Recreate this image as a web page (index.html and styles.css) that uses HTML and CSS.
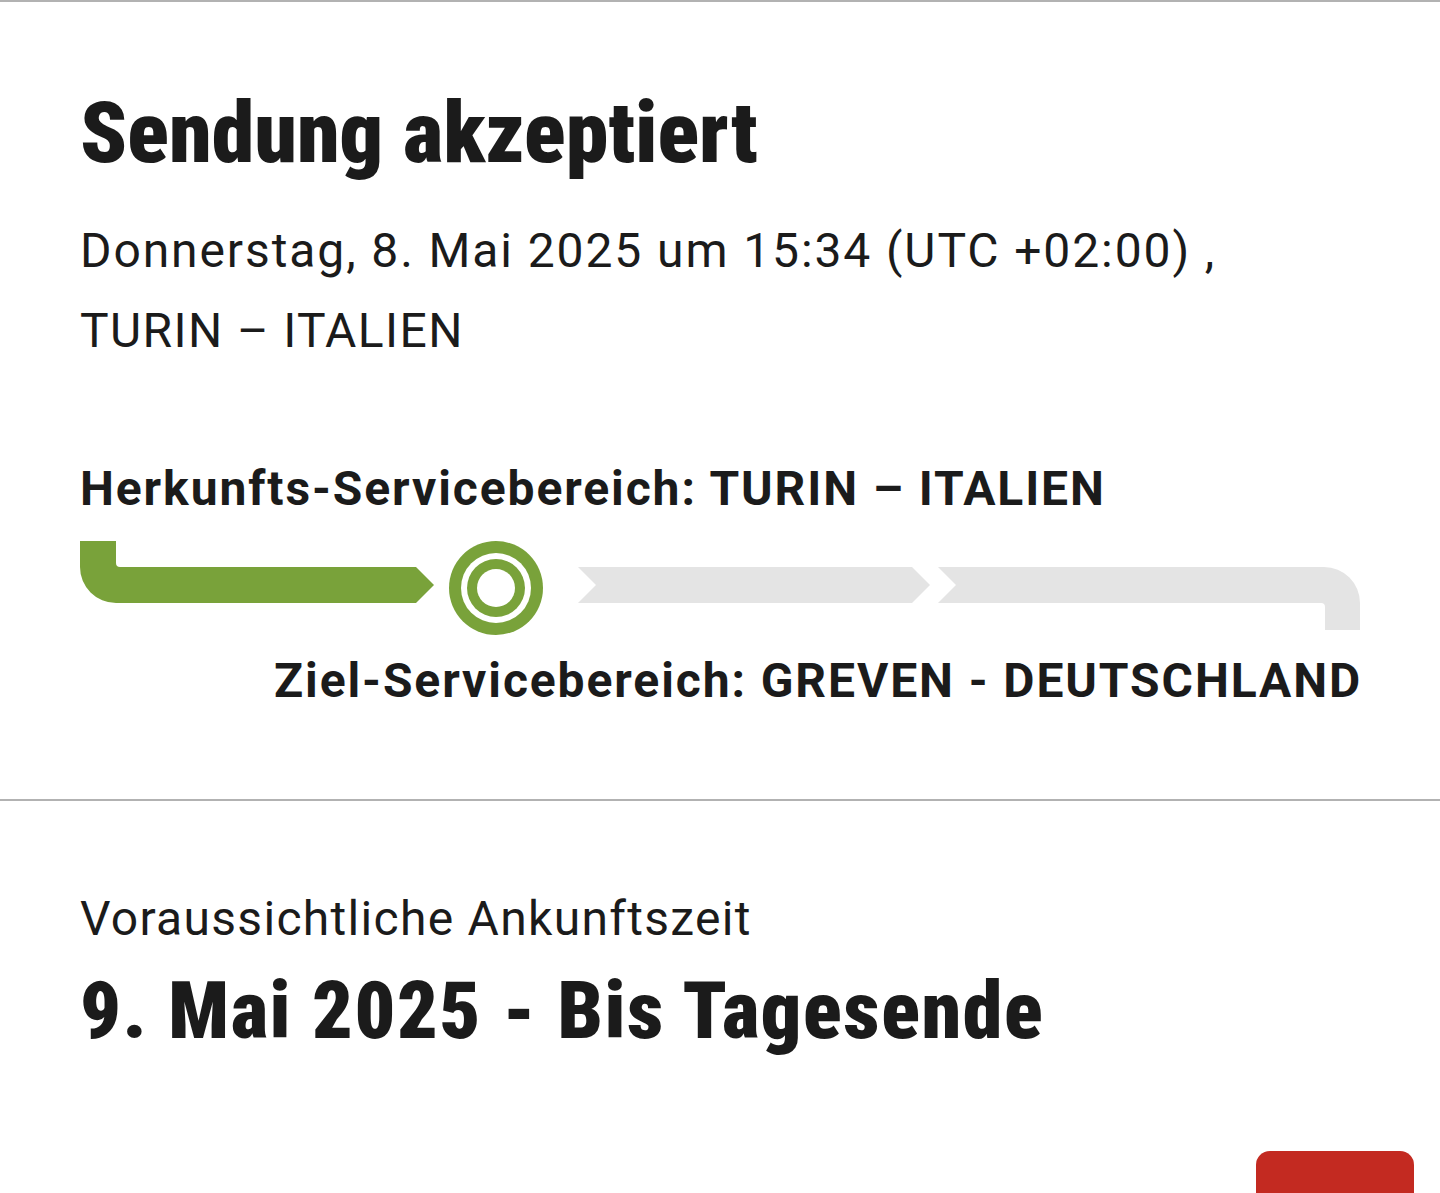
FILE: index.html
```html
<!DOCTYPE html>
<html lang="de">
<head>
<meta charset="utf-8">
<title>Sendungsverfolgung</title>
<link rel="stylesheet" href="styles.css">
</head>
<body>
<main class="page">
  <section class="status">
    <h1 class="status-title">Sendung akzeptiert</h1>
    <p class="status-date">Donnerstag, 8. Mai 2025 um 15:34 (UTC +02:00) ,</p>
    <p class="status-place">TURIN – ITALIEN</p>
  </section>

  <section class="route">
    <p class="route-origin">Herkunfts-Servicebereich: TURIN – ITALIEN</p>
    <svg class="route-bar" viewBox="0 0 1280 96" width="1280" height="96" aria-hidden="true">
      <path fill="#79a23a" d="M0,1 H36 V23 Q36,27 40,27 H336 L354,45 L336,63 H36 A36,36 0 0 1 0,27 Z"/>
      <circle cx="416" cy="48" r="47" fill="#79a23a"/>
      <circle cx="416" cy="48" r="35" fill="#ffffff"/>
      <circle cx="416" cy="48" r="29" fill="#79a23a"/>
      <circle cx="416" cy="48" r="19" fill="#ffffff"/>
      <path fill="#e4e4e4" d="M498,27 H832 L850,45 L832,63 H498 L516,45 Z"/>
      <path fill="#e4e4e4" d="M858,27 H1244 A36,36 0 0 1 1280,63 V90 H1245 V67 Q1245,63 1241,63 H858 L876,45 Z"/>
    </svg>
    <p class="route-dest">Ziel-Servicebereich: GREVEN - DEUTSCHLAND</p>
  </section>

  <section class="eta">
    <p class="eta-label">Voraussichtliche Ankunftszeit</p>
    <p class="eta-value">9. Mai 2025 - Bis Tagesende</p>
  </section>
</main>
<button class="feedback" type="button" aria-label="Feedback"></button>
</body>
</html>
```
FILE: styles.css
```css
html, body {
  margin: 0;
  padding: 0;
  background: #ffffff;
}
body {
  color: #1b1b1b;
  font-family: "Roboto", "Liberation Sans", sans-serif;
  overflow: hidden;
  height: 1193px;
  position: relative;
}
p, h1 { margin: 0; }

.page {
  border-top: 2px solid #b2b2b2;
}

.status {
  padding: 81px 80px 0;
}
.status-title {
  font-size: 86px;
  line-height: 100px;
  font-weight: 900;
  font-stretch: 75%;
  white-space: nowrap;
}
.status-date {
  margin-top: 28px;
  font-size: 48px;
  line-height: 80px;
  letter-spacing: 1.9px;
  white-space: nowrap;
}
.status-place {
  font-size: 48px;
  line-height: 80px;
  letter-spacing: 1.4px;
}

.route {
  padding: 88px 80px 88px;
  border-bottom: 2px solid #b2b2b2;
}
.route-origin,
.route-dest {
  font-size: 48px;
  line-height: 60px;
  font-weight: 700;
  letter-spacing: 1.9px;
  white-space: nowrap;
}
.route-bar {
  display: block;
  margin-top: 21px;
}
.route-dest {
  margin-top: 15px;
  text-align: right;
  margin-right: -2px;
}

.eta {
  padding: 88px 80px 0;
}
.eta-label {
  font-size: 48px;
  line-height: 60px;
  letter-spacing: 1.3px;
}
.eta-value {
  margin-top: 14px;
  font-size: 80px;
  line-height: 96px;
  font-weight: 900;
  font-stretch: 75%;
  letter-spacing: 1.6px;
  white-space: nowrap;
}

.feedback {
  position: absolute;
  left: 1256px;
  top: 1151px;
  width: 158px;
  height: 70px;
  border: 0;
  border-radius: 14px;
  background: #c32a21;
  padding: 0;
}
```
